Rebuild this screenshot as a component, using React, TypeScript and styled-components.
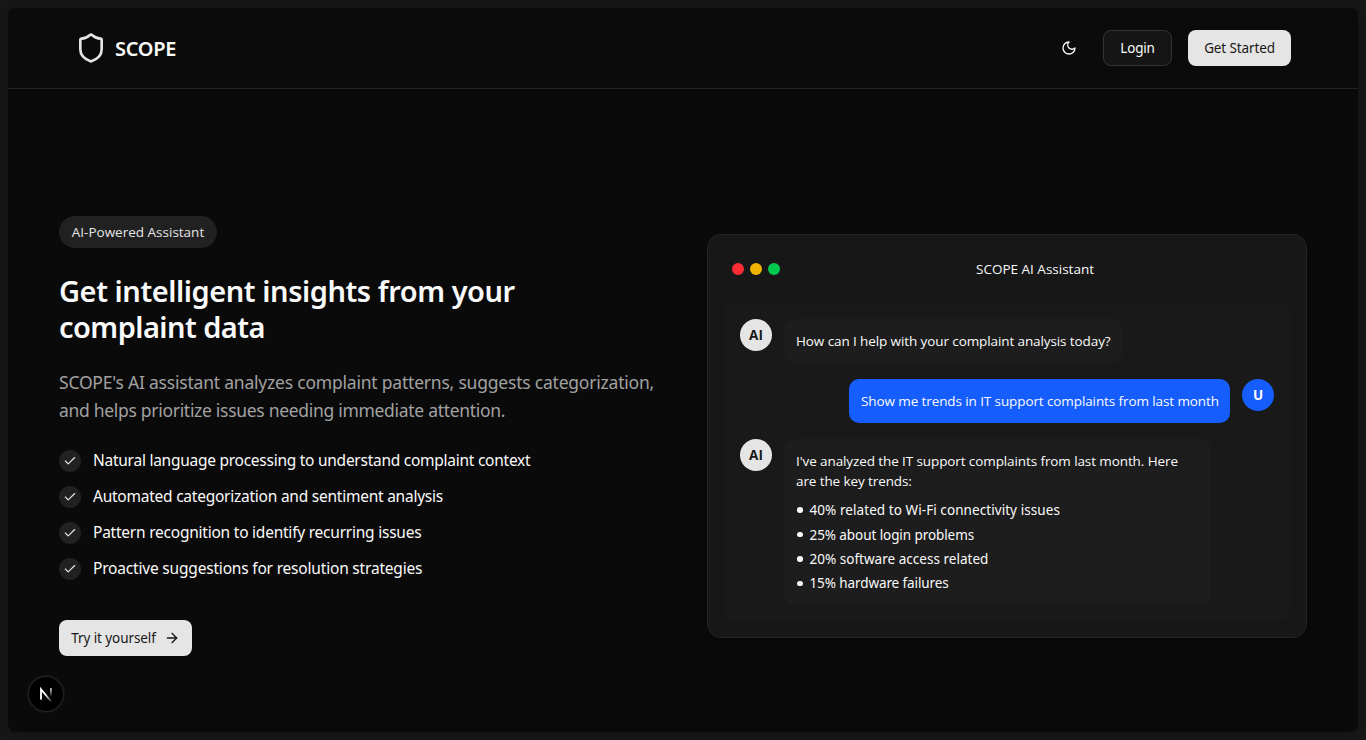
import React from "react";
import styled, { createGlobalStyle } from "styled-components";
import { ArrowRight, Check, Shield } from "lucide-react";

const GlobalStyle = createGlobalStyle`
  *, *::before, *::after { box-sizing: border-box; }
  body {
    margin: 0;
    background: #171717;
    color: #fafafa;
    font-family: "Noto Sans", sans-serif;
    overflow: hidden;
  }
  h1, p, ul { margin: 0; padding: 0; }
  ul { list-style: none; }
`;

const Page = styled.div`
  height: 740px;
  padding: 8px;
`;

const Frame = styled.div`
  height: 724px;
  border-radius: 8px;
  background: #0a0a0a;
  box-shadow: 0 1px 3px rgba(0, 0, 0, 0.1), 0 0 12px rgba(0, 0, 0, 0.1);
  overflow: hidden;
`;

const Header = styled.header`
  height: 81px;
  border-bottom: 1px solid #242424;
  padding: 0 67px;
  display: flex;
  align-items: center;
  justify-content: space-between;
  background: #0b0b0b;
`;

const Brand = styled.div`
  display: flex;
  align-items: center;
  gap: 8px;
  color: #e5e5e5;
`;

const BrandName = styled.div`
  padding-top: 2px;
  color: #fafafa;
`;

const Actions = styled.div`
  display: flex;
  align-items: center;
  gap: 16px;
`;

const IconButton = styled.button`
  width: 36px;
  height: 36px;
  border: 0;
  padding: 0;
  background: none;
  color: #fafafa;
  display: flex;
  align-items: center;
  justify-content: center;
`;

const Button = styled.button<{ $width: number; $outline?: boolean }>`
  width: ${(p) => p.$width}px;
  height: 36px;
  padding: 0;
  border: ${(p) => (p.$outline ? "1px solid #343434" : "0")};
  border-radius: 8px;
  background: ${(p) => (p.$outline ? "#151515" : "#e5e5e5")};
  color: ${(p) => (p.$outline ? "#fafafa" : "#171717")};
  font-family: inherit;
  display: flex;
  align-items: center;
  justify-content: center;
  gap: 8px;
`;

const Text = styled.span<{
  $size?: number;
  $line?: number;
  $track?: number;
  $weight?: number;
  $open?: boolean;
}>`
  display: block;
  font-family: ${(p) => (p.$open ? '"Open Sans", sans-serif' : "inherit")};
  font-size: ${(p) => p.$size ?? 13.5}px;
  line-height: ${(p) => p.$line ?? 20}px;
  letter-spacing: ${(p) => p.$track ?? 0}px;
  font-weight: ${(p) => p.$weight ?? 400};
  white-space: nowrap;
`;

const Hero = styled.main`
  padding: 127px 51px 0;
  display: grid;
  grid-template-columns: 600px 600px;
  gap: 48px;
  align-items: center;
`;

const Intro = styled.section`
  height: 440px;
  display: flex;
  flex-direction: column;
  align-items: flex-start;
`;

const Pill = styled.div`
  height: 32px;
  width: 158px;
  border-radius: 16px;
  background: #212121;
  color: #e5e5e5;
  display: flex;
  align-items: center;
  justify-content: center;
`;

const Title = styled.h1`
  margin-top: 25px;
`;

const Lead = styled.p`
  margin-top: 23px;
  color: #a1a1a1;
`;

const Features = styled.ul`
  margin-top: 25px;
  display: grid;
  gap: 12px;
`;

const Feature = styled.li`
  display: flex;
  align-items: center;
  gap: 12px;
  height: 24px;
`;

const FeatureLabel = styled.div`
  padding-bottom: 2px;
`;

const Tick = styled.span`
  width: 22px;
  height: 22px;
  border-radius: 50%;
  background: #212121;
  color: #e5e5e5;
  display: flex;
  align-items: center;
  justify-content: center;
`;

const Cta = styled.div`
  margin-top: 39px;
`;

const Card = styled.section`
  height: 404px;
  border: 1px solid #242424;
  border-radius: 14px;
  background: #171717;
  padding: 16px;
  box-shadow: 0 10px 15px -3px rgba(0, 0, 0, 0.1), 0 4px 6px -4px rgba(0, 0, 0, 0.1);
`;

const CardBar = styled.div`
  height: 52px;
  padding-left: 8px;
  padding-bottom: 16px;
  display: flex;
  align-items: center;
`;

const Dots = styled.div`
  display: flex;
  gap: 6px;
`;

const Dot = styled.span<{ $color: string }>`
  width: 12px;
  height: 12px;
  border-radius: 50%;
  background: ${(p) => p.$color};
`;

const CardTitle = styled.div`
  flex: 1;
  display: flex;
  justify-content: center;
`;

const Chat = styled.div`
  height: 318px;
  padding: 16px;
  border-radius: 8px;
  background: #191919;
  display: flex;
  flex-direction: column;
  gap: 16px;
`;

const Message = styled.div<{ $mine?: boolean }>`
  display: flex;
  flex-direction: ${(p) => (p.$mine ? "row-reverse" : "row")};
  align-items: flex-start;
  gap: 12px;
`;

const Avatar = styled.span<{ $mine?: boolean }>`
  width: 32px;
  height: 32px;
  border-radius: 50%;
  background: ${(p) => (p.$mine ? "#155dfc" : "#e5e5e5")};
  color: ${(p) => (p.$mine ? "#ffffff" : "#171717")};
  display: flex;
  align-items: center;
  justify-content: center;
`;

const Bubble = styled.div<{ $width: number; $mine?: boolean }>`
  width: ${(p) => p.$width}px;
  padding: 12px;
  border-radius: 10px;
  background: ${(p) => (p.$mine ? "#155dfc" : "#1d1d1d")};
`;

const Trends = styled.ul`
  margin-top: 9px;
  margin-bottom: -1px;
  display: grid;
  gap: 4px;
`;

const Trend = styled.li`
  display: flex;
  align-items: center;
  height: 20.4px;
  gap: 7px;
  padding-left: 1px;
`;

const Bullet = styled.span`
  width: 5.5px;
  height: 5.5px;
  border-radius: 50%;
  background: #fafafa;
`;

const DevBadge = styled.div`
  position: fixed;
  left: 28px;
  bottom: 28px;
  width: 36px;
  height: 36px;
  border-radius: 50%;
  background: #000;
  box-shadow: inset 0 0 0 1px #262626, 0 0 0 1px #171717;
  display: flex;
  align-items: center;
  justify-content: center;
`;

const features = [
  { text: "Natural language processing to understand complaint context", track: -0.26 },
  { text: "Automated categorization and sentiment analysis", track: -0.24 },
  { text: "Pattern recognition to identify recurring issues", track: -0.23 },
  { text: "Proactive suggestions for resolution strategies", track: -0.19 },
];

const trends = [
  { text: "40% related to Wi-Fi connectivity issues", track: 0.07 },
  { text: "25% about login problems", track: -0.08 },
  { text: "20% software access related", track: 0.02 },
  { text: "15% hardware failures", track: -0.1 },
];

function MoonIcon() {
  return (
    <svg
      width="16"
      height="16"
      viewBox="0 0 24 24"
      fill="none"
      stroke="currentColor"
      strokeWidth="2"
      strokeLinecap="round"
      strokeLinejoin="round"
    >
      <path d="M12 3a6 6 0 0 0 9 9 9 9 0 1 1-9-9Z" />
    </svg>
  );
}

function NextMark() {
  return (
    <svg width="36" height="36" viewBox="0 0 36 36" fill="none">
      <defs>
        <linearGradient id="stem" x1="0" y1="12" x2="0" y2="21" gradientUnits="userSpaceOnUse">
          <stop stopColor="#fff" />
          <stop offset="1" stopColor="#fff" stopOpacity="0" />
        </linearGradient>
        <linearGradient id="diag" x1="18" y1="18" x2="23" y2="25" gradientUnits="userSpaceOnUse">
          <stop stopColor="#fff" />
          <stop offset="1" stopColor="#fff" stopOpacity="0.2" />
        </linearGradient>
      </defs>
      <path d="M13 23.7V13.2L23 25.4" stroke="url(#diag)" strokeWidth="1.8" />
      <path d="M22.9 12.3V20.5" stroke="url(#stem)" strokeWidth="1.6" />
    </svg>
  );
}

export default function App() {
  return (
    <Page>
      <GlobalStyle />
      <Frame>
        <Header>
          <Brand>
            <Shield size={32} />
            <BrandName><Text $size={20} $line={28} $weight={600} $track={-0.3}>SCOPE</Text></BrandName>
          </Brand>
          <Actions>
            <IconButton aria-label="Toggle theme"><MoonIcon /></IconButton>
            <Button $width={69} $outline><Text $track={-0.2}>Login</Text></Button>
            <Button $width={103}><Text $track={-0.12}>Get Started</Text></Button>
          </Actions>
        </Header>
        <Hero>
          <Intro>
            <Pill><Text $open>AI-Powered Assistant</Text></Pill>
            <Title>
              <Text $size={29} $line={36} $weight={600} $track={-0.44}>Get intelligent insights from your</Text>
              <Text $size={29} $line={36} $weight={600} $track={-0.55}>complaint data</Text>
            </Title>
            <Lead>
              <Text $size={17.5} $line={28} $track={-0.21}>SCOPE's AI assistant analyzes complaint patterns, suggests categorization,</Text>
              <Text $size={17.5} $line={28} $track={-0.3}>and helps prioritize issues needing immediate attention.</Text>
            </Lead>
            <Features>
              {features.map((f) => (
                <Feature key={f.text}>
                  <Tick><Check size={14} /></Tick>
                  <FeatureLabel><Text $size={15.5} $line={22} $track={f.track}>{f.text}</Text></FeatureLabel>
                </Feature>
              ))}
            </Features>
            <Cta>
              <Button $width={133}><Text $track={-0.09}>Try it yourself</Text><ArrowRight size={16} /></Button>
            </Cta>
          </Intro>
          <Card>
            <CardBar>
              <Dots>
                <Dot $color="#fb2c36" />
                <Dot $color="#f0b100" />
                <Dot $color="#00c950" />
              </Dots>
              <CardTitle><Text $open>SCOPE AI Assistant</Text></CardTitle>
            </CardBar>
            <Chat>
              <Message>
                <Avatar><Text $open $weight={700}>AI</Text></Avatar>
                <Bubble $width={338}><Text $open $track={-0.1}>How can I help with your complaint analysis today?</Text></Bubble>
              </Message>
              <Message $mine>
                <Avatar $mine><Text $open $weight={700}>U</Text></Avatar>
                <Bubble $width={381} $mine><Text $open $track={-0.1}>Show me trends in IT support complaints from last month</Text></Bubble>
              </Message>
              <Message>
                <Avatar><Text $open $weight={700}>AI</Text></Avatar>
                <Bubble $width={427}>
                  <Text $open $track={-0.1}>I've analyzed the IT support complaints from last month. Here</Text>
                  <Text $open $track={-0.1}>are the key trends:</Text>
                  <Trends>
                    {trends.map((t) => (
                      <Trend key={t.text}><Bullet /><Text $track={t.track}>{t.text}</Text></Trend>
                    ))}
                  </Trends>
                </Bubble>
              </Message>
            </Chat>
          </Card>
        </Hero>
      </Frame>
      <DevBadge><NextMark /></DevBadge>
    </Page>
  );
}
